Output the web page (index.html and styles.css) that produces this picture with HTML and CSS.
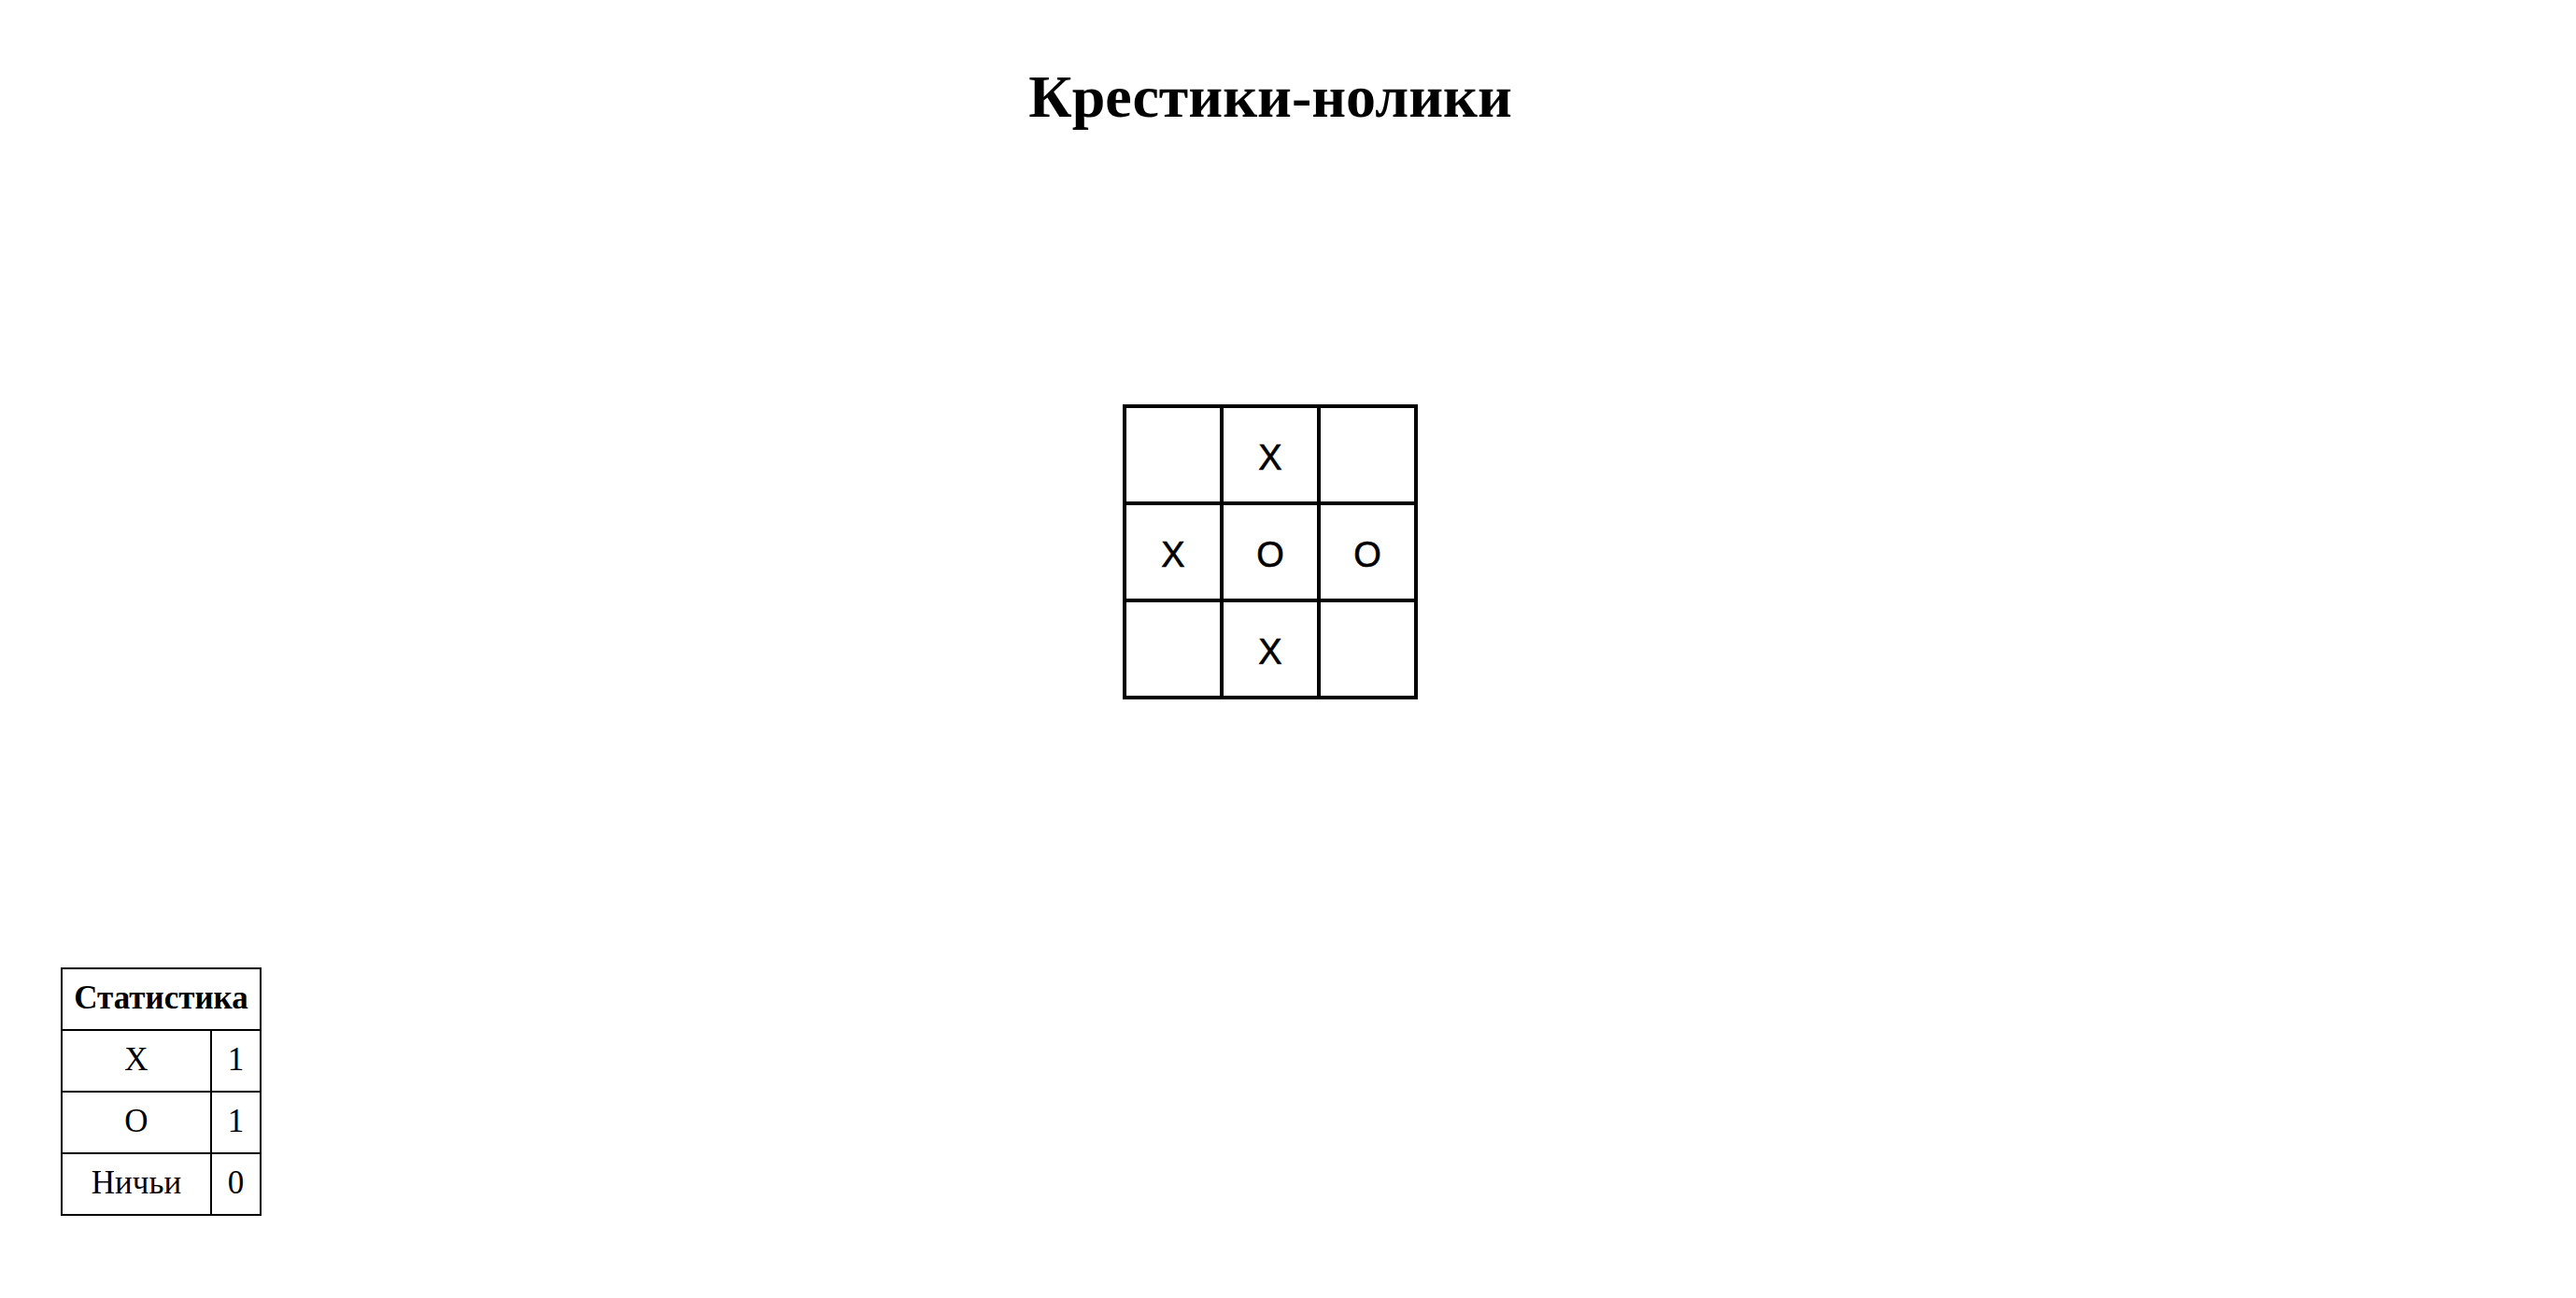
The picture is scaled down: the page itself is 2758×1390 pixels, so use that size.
FILE: index.html
```html
<!DOCTYPE html>
<html lang="ru">
<head>
<meta charset="utf-8">
<title>Крестики-нолики</title>
<link rel="stylesheet" href="styles.css">
</head>
<body>
<div class="page">
  <h1 class="title">Крестики-нолики</h1>
  <div class="board">
    <div class="cell"></div>
    <div class="cell">X</div>
    <div class="cell"></div>
    <div class="cell">X</div>
    <div class="cell">O</div>
    <div class="cell">O</div>
    <div class="cell"></div>
    <div class="cell">X</div>
    <div class="cell"></div>
  </div>
  <table class="stats">
    <tr><th colspan="2">Статистика</th></tr>
    <tr><td class="name">X</td><td class="val">1</td></tr>
    <tr><td class="name">O</td><td class="val">1</td></tr>
    <tr><td class="name">Ничьи</td><td class="val">0</td></tr>
  </table>
</div>
</body>
</html>
```

FILE: styles.css
```css
html, body {
  margin: 0;
  padding: 0;
  background: #fff;
  color: #000;
}
body {
  font-family: "Liberation Serif", "Times New Roman", serif;
}
.page {
  padding-right: 38px;
}
.title {
  margin: 67px 0 0;
  font-size: 64px;
  font-weight: bold;
  text-align: center;
  line-height: normal;
}
.board {
  margin: 292px auto 0;
  width: max-content;
  display: grid;
  grid-template-columns: repeat(3, 100px);
  grid-auto-rows: 100px;
  gap: 4px;
  padding: 4px;
  background: #000;
}
.cell {
  background: #fff;
  display: flex;
  align-items: center;
  justify-content: center;
  font-family: "Liberation Sans", Arial, sans-serif;
  font-size: 38px;
  -webkit-text-stroke: 0.6px #000;
  padding-top: 6px;
  box-sizing: border-box;
}
.stats {
  margin: 287px 0 0 65px;
  border-collapse: collapse;
  width: 215px;
  font-size: 35px;
}
.stats th,
.stats td {
  border: 2px solid #000;
  padding: 13px 8px 15px;
  line-height: 36px;
  text-align: center;
  white-space: nowrap;
}
.stats th {
  font-weight: bold;
}
.stats .name {
  width: 142px;
}
.stats .val {
  width: 35px;
}
```
